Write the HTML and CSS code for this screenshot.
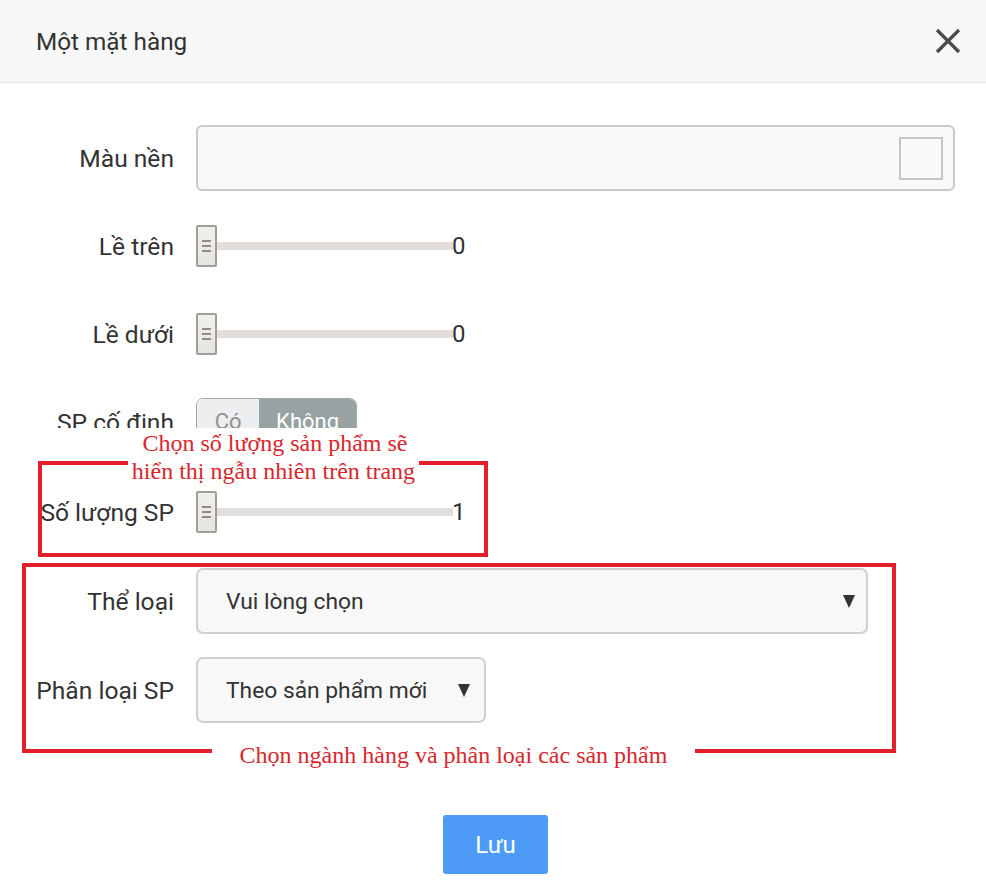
FILE: index.html
```html
<!DOCTYPE html>
<html lang="vi">
<head>
<meta charset="utf-8">
<title>Một mặt hàng</title>
<link rel="stylesheet" href="styles.css">
</head>
<body>
<div class="modal">
  <header class="modal-head">
    <h1 class="modal-title">Một mặt hàng</h1>
    <button class="close" type="button" aria-label="Đóng">
      <svg width="26" height="26" viewBox="0 0 26 26"><path d="M2 2 L24 24 M24 2 L2 24" stroke="#4a4a4a" stroke-width="3.2" fill="none"/></svg>
    </button>
  </header>

  <div class="form">
    <div class="row">
      <label class="label">Màu nền</label>
      <div class="color-box"><span class="swatch"></span></div>
    </div>

    <div class="row">
      <label class="label">Lề trên</label>
      <div class="slider">
        <span class="handle"><i></i><i></i><i></i></span>
        <span class="track"></span>
        <span class="value">0</span>
      </div>
    </div>

    <div class="row">
      <label class="label">Lề dưới</label>
      <div class="slider">
        <span class="handle"><i></i><i></i><i></i></span>
        <span class="track"></span>
        <span class="value">0</span>
      </div>
    </div>

    <div class="row">
      <label class="label">SP cố định</label>
      <div class="toggle">
        <span class="opt">Có</span>
        <span class="opt opt-on">Không</span>
      </div>
    </div>

    <div class="row row-qty">
      <label class="label">Số lượng SP</label>
      <div class="slider">
        <span class="handle"><i></i><i></i><i></i></span>
        <span class="track"></span>
        <span class="value">1</span>
      </div>
    </div>

    <div class="row row-cat">
      <label class="label">Thể loại</label>
      <div class="select select-wide"><span>Vui lòng chọn</span><span class="arrow"></span></div>
    </div>

    <div class="row row-type">
      <label class="label">Phân loại SP</label>
      <div class="select select-narrow"><span>Theo sản phẩm mới</span><span class="arrow"></span></div>
    </div>
  </div>

  <div class="foot">
    <button class="save" type="button">Lưu</button>
  </div>

  <div class="note-box note-box-1"></div>
  <div class="note-box note-box-2"></div>
  <div class="note note-1a">Chọn số lượng sản phẩm sẽ</div>
  <div class="note note-1b">hiển thị ngẫu nhiên trên trang</div>
  <div class="note note-2">Chọn ngành hàng và phân loại các sản phẩm</div>
</div>
</body>
</html>
```

FILE: styles.css
```css
* { box-sizing: border-box; }
html, body { margin: 0; padding: 0; background: #fff; }
body {
  font-family: Roboto, "Noto Sans", Arial, sans-serif;
  color: #333;
  width: 986px;
  height: 888px;
  overflow: hidden;
}
.modal { position: relative; width: 986px; height: 888px; }

.modal-head {
  height: 83px;
  background: #f7f7f7;
  border-bottom: 1px solid #e6e6e6;
  display: flex;
  align-items: center;
  justify-content: space-between;
  padding: 0 25px 0 36px;
}
.modal-title {
  margin: 0;
  font-size: 24.3px;
  font-weight: 400;
  color: #333;
}
.close {
  border: 0;
  background: none;
  padding: 0;
  width: 26px;
  height: 26px;
  display: flex;
  cursor: pointer;
}

.form {
  padding: 42px 31px 0 0;
  display: flex;
  flex-direction: column;
  gap: 22px;
}
.row {
  display: grid;
  grid-template-columns: 174px 1fr;
  column-gap: 22px;
  align-items: center;
  height: 66px;
}
.row-qty { margin-top: 2px; }
.row-cat { margin-top: 1px; }
.row-type { margin-top: 1px; }
.label {
  text-align: right;
  font-size: 24.6px;
  color: #333;
  white-space: nowrap;
}

.color-box {
  height: 66px;
  border: 2px solid #cacaca;
  border-radius: 6px;
  background: #f9f9f9;
  display: flex;
  align-items: center;
  justify-content: flex-end;
  padding-right: 10px;
}
.swatch {
  width: 44px;
  height: 43px;
  border: 2px solid #c6c6c6;
  background: #fafafa;
}

.slider { display: flex; align-items: center; height: 42px; }
.handle {
  width: 21px;
  height: 42px;
  border: 2px solid #a29e97;
  border-radius: 2px;
  background: linear-gradient(#f1f0ed, #e6e4df);
  display: flex;
  flex-direction: column;
  justify-content: center;
  gap: 3px;
  padding-left: 4px;
}
.handle i {
  display: block;
  width: 9px;
  height: 2px;
  background: #8f8b85;
}
.track {
  width: 236px;
  height: 8px;
  background: #e2dedb;
}
.value { font-size: 24px; color: #333; margin-left: -1px; }

.toggle {
  display: flex;
  width: 161px;
  height: 46px;
  margin-top: -2px;
  border: 1px solid #a3a9a9;
  border-radius: 7px;
  overflow: hidden;
  font-size: 22px;
}
.opt {
  width: 63px;
  display: flex;
  align-items: center;
  justify-content: center;
  background: #eceeef;
  color: #8c9195;
}
.opt-on {
  width: 98px;
  background: #98a2a2;
  color: #fff;
}

.select {
  height: 66px;
  border: 2px solid #cfcfcf;
  border-radius: 7px;
  background: #f8f8f8;
  display: flex;
  align-items: center;
  justify-content: space-between;
  padding: 0 11px 0 28px;
  font-size: 22.8px;
  color: #333;
}
.select-wide { width: 672px; }
.select-narrow { width: 290px; padding-right: 14px; }
.arrow {
  width: 0;
  height: 0;
  border-left: 6px solid transparent;
  border-right: 6px solid transparent;
  border-top: 13px solid #333;
}

.foot {
  display: flex;
  justify-content: center;
  padding-left: 5px;
  margin-top: 92px;
}
.save {
  width: 105px;
  height: 59px;
  border: 0;
  border-radius: 3px;
  background: #4d9bf6;
  color: #fff;
  font-family: Roboto, "Noto Sans", Arial, sans-serif;
  font-size: 24px;
}

.note-box {
  position: absolute;
  border: 4px solid #e21f2b;
}
.note-box-1 { left: 38px; top: 461px; width: 450px; height: 96px; }
.note-box-2 { left: 22px; top: 563px; width: 874px; height: 190px; }
.note {
  position: absolute;
  background: #fff;
  color: #d8262e;
  font-family: "Liberation Serif", "Times New Roman", serif;
  font-size: 24px;
  line-height: 29px;
  text-align: center;
}
.note-1a { left: 30px; top: 428px; width: 490px; height: 31px; padding-top: 1px; }
.note-1b { left: 128px; top: 457px; width: 291px; height: 28px; }
.note-2 { left: 212px; top: 741px; width: 483px; height: 29px; }
```
